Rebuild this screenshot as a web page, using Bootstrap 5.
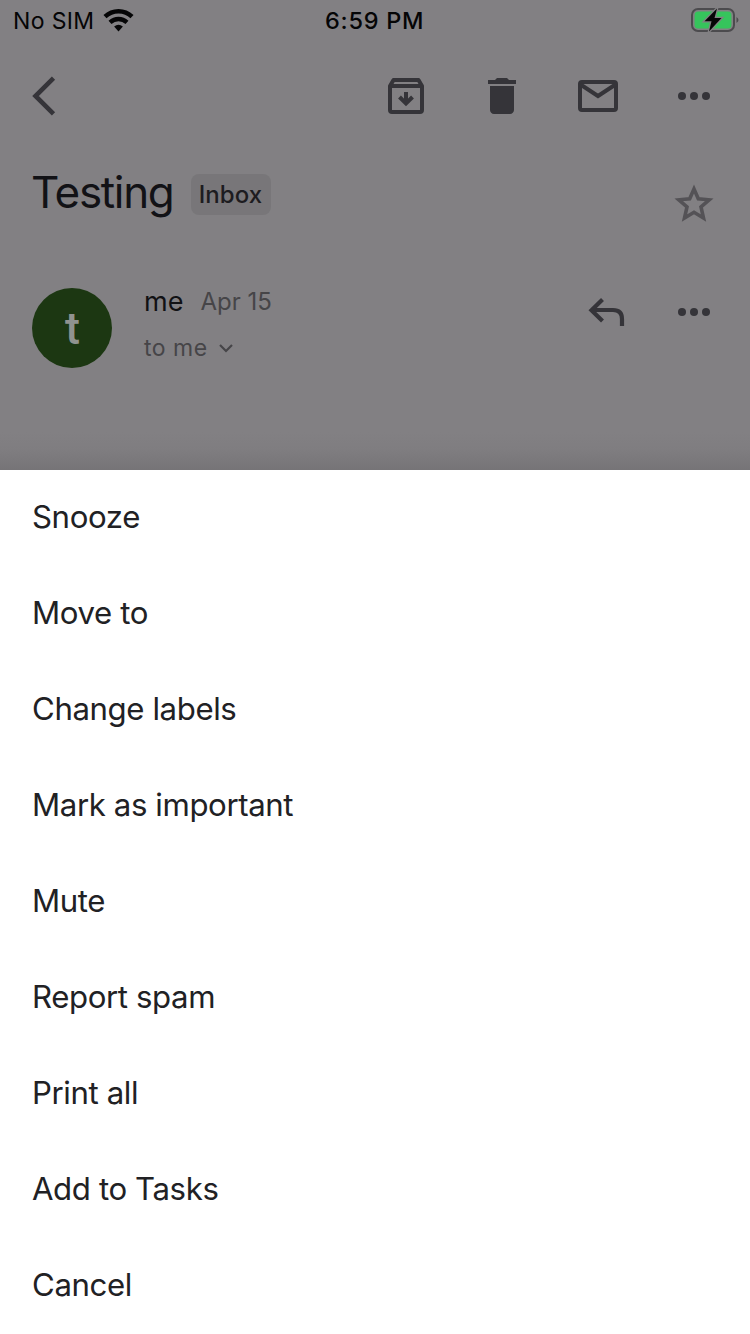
<!DOCTYPE html>
<html lang="en">
<head>
<meta charset="utf-8">
<meta name="viewport" content="width=device-width, initial-scale=1">
<title>Testing - Inbox</title>
<link href="https://cdn.jsdelivr.net/npm/bootstrap@5.3.0/dist/css/bootstrap.min.css" rel="stylesheet">
<style>
body{font-family:Inter,"Liberation Sans",sans-serif;background:#fff;height:1334px;overflow:hidden}
svg{display:block;flex:none}
.backdrop-pane{height:470px;background:linear-gradient(#828083 0,#828083 432px,#7f7d80 450px,#767477 470px);color:#353439}
.status-bar{height:40px;font-size:23px;color:#050506;padding:1px 10px 0 13px}
.toolbar{height:112px;padding:0 32px 0 20px}
.icon-row{gap:48px}
.carrier{letter-spacing:.35px;width:312px}
.carrier-name{padding-top:2px}
.clock{font-weight:500;font-size:23.500px;letter-spacing:.75px}
.subject-row{height:104px;padding:0 32px}
.subject{font-size:44px;line-height:56px;letter-spacing:-1.350px;color:#121216;font-weight:400;margin:12px 0 0 -1px;width:141px;white-space:nowrap}
.folder-chip{height:41px;width:80px;border-radius:8px;background:#787679;color:#1d1c20;font-size:24px;font-weight:500;letter-spacing:.1px;margin:22px 0 0 19px;padding:0 1px 0 0}
.sender-row{padding:32px 32px 0}
.avatar{width:80px;height:80px;padding-left:1px;background:#1c3712;color:#90938f;font:500 45px/1 Roboto,sans-serif}
.sender-info{margin-left:32px;height:80px}
.sender-name{font-size:27px;line-height:28px;color:#111114}
.sent-date{font-size:24px;line-height:28px;color:#464548;margin-left:17px}
.recipient{font-size:23px;line-height:28px;color:#464548;margin-top:18px;letter-spacing:.5px}
.sender-actions{gap:42px}
.sheet-item{height:96px;padding:0 32px 2px;font-size:31.200px;line-height:40px;letter-spacing:-.4px;color:#212124;border:0}
</style>
</head>
<body>
<main class="backdrop-pane">
  <div class="status-bar d-flex align-items-center">
    <div class="carrier d-flex align-items-center">
      <span class="carrier-name">No SIM</span>
      <svg class="ms-2" width="34" height="26" viewBox="0 0 34 26" fill="none" stroke="#050506"><path d="M3 8.700C10.500 1.400 22.500 1.400 30 8.700M8 14.300c5-4.400 12-4.400 17 0" stroke-width="4.400"/><path d="M12.100 18.600q4.400-3.800 8.800 0L16.500 23.400Z" fill="#050506" stroke="none"/></svg>
    </div>
    <span class="clock">6:59 PM</span>
    <svg class="ms-auto" width="50" height="28" viewBox="0 0 50 28"><rect x="2" y="2" width="42" height="22" rx="6" fill="none" stroke="#4c4b4e" stroke-width="2"/><path d="M46.500 10q4 3 0 6Z" fill="#4c4b4e"/><rect x="4.600" y="4.500" width="36.800" height="17" rx="3.500" fill="#36c45c"/><path d="M27 1.500 14.500 14.200H21.500L19 24.500 31.500 11H24.500Z" fill="#050506" stroke="#828083" stroke-width="2.500" paint-order="stroke"/></svg>
  </div>
  <nav class="toolbar d-flex align-items-center justify-content-between">
    <svg width="48" height="48" viewBox="0 0 48 48" fill="none" stroke="currentColor" stroke-width="4.600"><path d="M33.500 6.200 15.500 24 33.500 41.800"/></svg>
    <div class="icon-row d-flex">
      <svg width="48" height="48" viewBox="0 0 48 48" fill="none" stroke="currentColor" stroke-width="4"><path d="M8 14 11.500 8h25L40 14v24q0 2-2 2H10q-2 0-2-2ZM8 14h32" stroke-linejoin="round"/><path d="M24 20v11M17.500 25l6.500 6.500 6.500-6.500"/></svg>
      <svg width="48" height="48" viewBox="0 0 24 24" fill="currentColor"><path d="M6 19c0 1.100.9 2 2 2h8c1.100 0 2-.9 2-2V7H6v12zM19 4h-3.500l-1-1h-5l-1 1H5v2h14V4z"/></svg>
      <svg width="48" height="48" viewBox="0 0 48 48" fill="none" stroke="currentColor" stroke-width="4"><rect x="6" y="10" width="36" height="28" rx="2"/><path d="M6.500 12.500 24 24 41.500 12.500"/></svg>
      <svg width="48" height="48" viewBox="0 0 24 24" fill="currentColor"><circle cx="6" cy="12" r="2"/><circle cx="12" cy="12" r="2"/><circle cx="18" cy="12" r="2"/></svg>
    </div>
  </nav>
  <div class="subject-row d-flex align-items-start">
    <h1 class="subject">Testing</h1>
    <span class="folder-chip d-flex align-items-center justify-content-center">Inbox</span>
    <svg class="ms-auto mt-4" width="48" height="52" viewBox="0 0 48 52" fill="none" stroke="#545256" stroke-width="3.600"><path d="M24 13 28.300 22.800 39.200 23.800 31 31 33.500 42 24 36.300 14.500 42 17 31 8.800 23.800 19.700 22.800Z"/></svg>
  </div>
  <div class="sender-row d-flex align-items-start">
    <div class="avatar rounded-circle d-flex align-items-center justify-content-center">t</div>
    <div class="sender-info">
      <div class="d-flex align-items-center"><span class="sender-name">me</span><span class="sent-date">Apr 15</span></div>
      <div class="recipient d-flex align-items-center"><span>to me</span>
        <svg class="ms-2" width="20" height="16" viewBox="0 0 20 16" fill="none" stroke="currentColor" stroke-width="2.200"><path d="M4 5l6 6 6-6"/></svg>
      </div>
    </div>
    <div class="sender-actions d-flex ms-auto">
      <svg width="48" height="48" viewBox="0 0 48 48" fill="none" stroke="currentColor" stroke-width="4.200"><path d="M22.500 11.500 11.500 22.300 22.500 33M12 22H33Q42 22 42 31v7"/></svg>
      <svg width="48" height="48" viewBox="0 0 24 24" fill="currentColor"><circle cx="6" cy="12" r="2"/><circle cx="12" cy="12" r="2"/><circle cx="18" cy="12" r="2"/></svg>
    </div>
  </div>
</main>
<div class="list-group list-group-flush">
  <a class="sheet-item list-group-item d-flex align-items-center">Snooze</a>
  <a class="sheet-item list-group-item d-flex align-items-center">Move to</a>
  <a class="sheet-item list-group-item d-flex align-items-center">Change labels</a>
  <a class="sheet-item list-group-item d-flex align-items-center">Mark as important</a>
  <a class="sheet-item list-group-item d-flex align-items-center">Mute</a>
  <a class="sheet-item list-group-item d-flex align-items-center">Report spam</a>
  <a class="sheet-item list-group-item d-flex align-items-center">Print all</a>
  <a class="sheet-item list-group-item d-flex align-items-center">Add to Tasks</a>
  <a class="sheet-item list-group-item d-flex align-items-center">Cancel</a>
</div>
<script src="https://cdn.jsdelivr.net/npm/bootstrap@5.3.0/dist/js/bootstrap.bundle.min.js"></script>
</body>
</html>
